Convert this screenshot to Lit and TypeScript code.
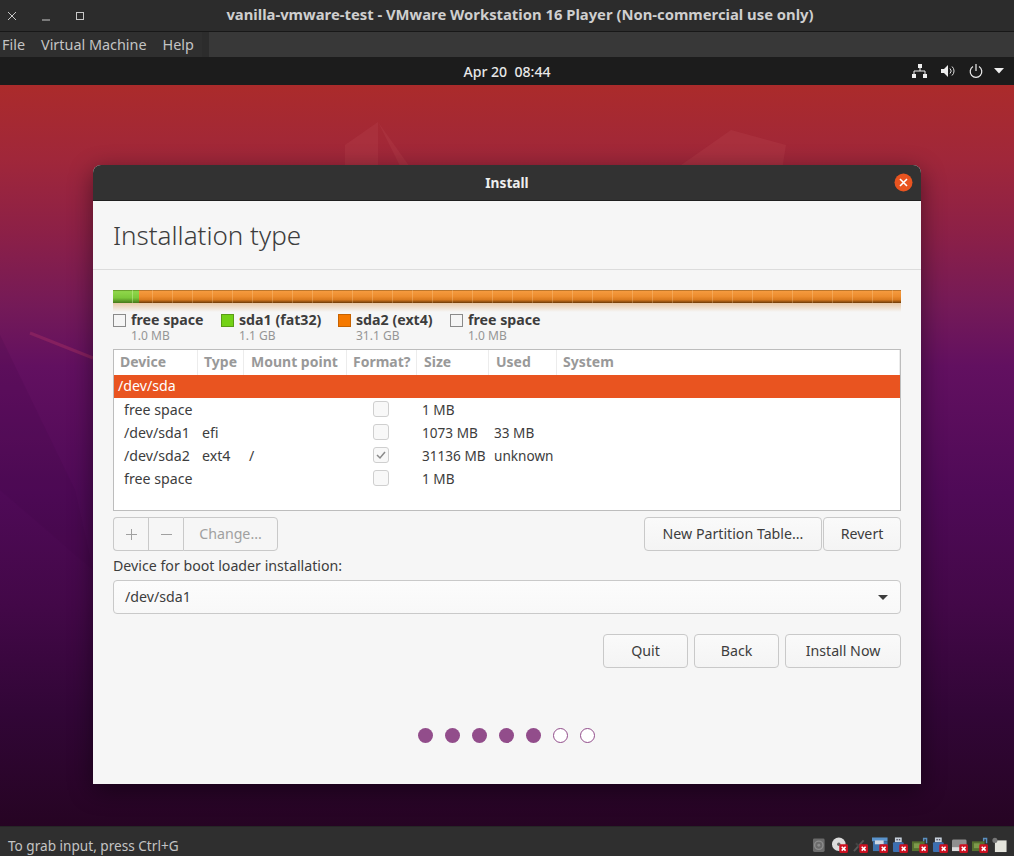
import { LitElement, html, css, svg } from "lit";
import { customElement } from "lit/decorators.js";

const badge = svg`<rect x="7.5" y="7" width="9" height="9" rx="1.5" fill="#cc1020"/><path d="M10 9.5l4 4M14 9.5l-4 4" stroke="#fff" stroke-width="1.6"/>`;
const card = svg`<rect x="0" y="4" width="13" height="10" fill="#55702f"/><rect x="2" y="6" width="6" height="5" fill="#7d9a4c"/><path d="M12 4V1h3v5" fill="none" stroke="#5a8fc0" stroke-width="1.5"/>`;
const usb = svg`<rect x="3" y="0" width="7" height="5" fill="#c9d3de"/><rect x="4.5" y="1.5" width="1.5" height="1.5" fill="#556"/><rect x="7" y="1.5" width="1.5" height="1.5" fill="#556"/><rect x="1" y="5" width="11" height="10" rx="1" fill="#3c6fb0"/>`;
const statusIcons = [
  svg`<rect x="1" y="1" width="12" height="14" rx="1.5" fill="#6b6b6b"/><circle cx="7" cy="8" r="4.3" fill="none" stroke="#8d8d8d" stroke-width="1.4"/><circle cx="7" cy="8" r="1.5" fill="#8d8d8d"/>`,
  svg`<circle cx="7" cy="7" r="7" fill="#dcdcdc"/><circle cx="7" cy="7" r="1.8" fill="#666"/>${badge}`,
  svg`<path d="M2 14L12 3" stroke="#585858" stroke-width="2"/><path d="M4 6l5 5" stroke="#444" stroke-width="2"/>${badge}`,
  svg`<rect x="0" y="0" width="16" height="4" fill="#5a93cc"/><rect x="1" y="4" width="15" height="10" fill="#3f74ae"/><rect x="3" y="3" width="9" height="4" fill="#cfd8e3"/>${badge}`,
  svg`${usb}${badge}`,
  svg`${card}${badge}`,
  svg`${usb}${badge}`,
  svg`<rect x="0" y="2" width="15" height="12" rx="1.5" fill="#8f8f8f"/><rect x="0" y="10" width="15" height="4" fill="#dcdcdc"/>${badge}`,
  svg`${card}${badge}`,
  svg`<path d="M3 3h12v12H3z" fill="#e4e4dc"/><circle cx="3" cy="3" r="2.6" fill="#777"/>`,
];

const legend = [
  { c: "#f5f5f5", b: "#8a8a8a", n: "free space", s: "1.0 MB", w: 108 },
  { c: "#73d216", b: "#5a9c16", n: "sda1 (fat32)", s: "1.1 GB", w: 117 },
  { c: "#f57900", b: "#c76200", n: "sda2 (ext4)", s: "31.1 GB", w: 112 },
  { c: "#f5f5f5", b: "#8a8a8a", n: "free space", s: "1.0 MB", w: 108 },
];
const rows = [
  { d: "free space", t: "", m: "", f: false, s: "1 MB", u: "" },
  { d: "/dev/sda1", t: "efi", m: "", f: false, s: "1073 MB", u: "33 MB" },
  { d: "/dev/sda2", t: "ext4", m: "/", f: true, s: "31136 MB", u: "unknown" },
  { d: "free space", t: "", m: "", f: false, s: "1 MB", u: "" },
];
const heads = ["Device", "Type", "Mount point", "Format?", "Size", "Used", "System"];

@customElement("app-root")
export class AppRoot extends LitElement {
  static styles = css`
    :host { display: block; width: 1014px; height: 856px; overflow: hidden; font-family: "Noto Sans", sans-serif; font-size: 14px; color: #3d3d3d; }
    .frame { display: flex; flex-direction: column; height: 856px; }
    .titlebar { height: 31px; background: #2c2c2c; border-bottom: 1px solid #181818; display: flex; align-items: center; position: relative; flex: none; }
    .wc { display: flex; padding-left: 7px; gap: 24px; }
    .wc svg { width: 10px; height: 10px; display: block; }
    .wtitle { position: absolute; left: 26px; right: 0; top: 4px; text-align: center; color: #cfcfcf; font-weight: 700; font-size: 14.8px; line-height: 20px; white-space: nowrap; }
    .menubar { height: 25px; display: flex; background: #383838; flex: none; }
    .menus { width: 202px; background: #2f2f2f; display: flex; color: #c4c4c4; font-size: 14.4px; line-height: 25px; padding-left: 2px; box-sizing: border-box; gap: 16px; }
    .grip { width: 7px; background: #2c2c2c; }
    .panel { height: 28px; background: #1c1c1c; color: #e8e8e8; display: flex; align-items: center; position: relative; flex: none; }
    .clock { position: absolute; left: 0; right: 0; text-align: center; font-size: 14.1px; font-weight: 500; white-space: pre; }
    .tray { margin-left: auto; display: flex; align-items: center; padding-right: 10px; }
    .tray svg { display: block; }
    .desktop { flex: 1; position: relative; padding: 80px 93px 0; background: linear-gradient(180deg, #ab2b2b 0%, #a0273a 10%, #8c2047 20%, #741a58 30%, #621060 38%, #4f0a57 55%, #430848 70%, #310636 85%, #260423 100%); }
    .deco { position: absolute; left: 0; top: 0; }
    .window { position: relative; height: 619px; border-radius: 8px 8px 0 0; box-shadow: 0 6px 24px rgba(0,0,0,.45); display: flex; flex-direction: column; background: #f6f6f6; }
    .wbar { height: 35px; background: #323232; border-bottom: 1px solid #1f1f1f; border-radius: 8px 8px 0 0; color: #eee; font-weight: 700; font-size: 13.7px; display: flex; align-items: center; justify-content: center; position: relative; flex: none; }
    .close { position: absolute; right: 8px; top: 8px; width: 19px; height: 19px; display: block; }
    .heading { height: 67px; border-bottom: 1px solid #dcdcdc; padding-left: 20px; display: flex; align-items: center; font-size: 26px; font-weight: 300; color: #3d3d3d; padding-bottom: 1px; box-sizing: content-box; flex: none; }
    .body { padding: 20px 20px 0; display: flex; flex-direction: column; flex: 1; }
    .bar { height: 13px; display: flex; background: repeating-linear-gradient(90deg, transparent 0 19px, rgba(255,220,170,.28) 19px 20px), linear-gradient(180deg, #9a6020 0, #f59a3e 10%, #ec8c2e 50%, #d97a1f 75%, #6b3a08 100%); position: relative; flex: none; }
    .bar i { display: block; width: 26px; height: 13px; background: repeating-linear-gradient(90deg, transparent 0 19px, rgba(230,255,190,.35) 19px 20px), linear-gradient(180deg, #5a8a20 0, #8fd64a 12%, #7cc83a 60%, #47781a 100%); }
    .reflect { height: 9px; flex: none; background: linear-gradient(180deg, #e8c9a8, #f6f6f6); }
    .legend { display: flex; height: 37px; flex: none; margin-top: 0; }
    .li { display: flex; gap: 5px; }
    .sq { width: 11px; height: 11px; border: 1px solid; margin-top: 2px; flex: none; }
    .ln { font-weight: 700; font-size: 14.2px; line-height: 17px; color: #3d3d3d; white-space: nowrap; margin-top: -1px; }
    .ls { font-size: 12px; line-height: 15px; color: #959595; margin-top: 0; }
    .table { margin-top: 0; height: 162px; box-sizing: border-box; border: 1px solid #bdbdbd; background: #fff; flex: none; }
    .tr { display: grid; grid-template-columns: 84px 46px 103px 70px 72px 68px 1fr; height: 23px; align-items: center; font-size: 14.2px; line-height: 20px; }
    .th { height: 25px; font-weight: 700; color: #999; font-size: 14px; }
    .th span { height: 25px; line-height: 23px; padding-left: 6px; border-right: 1px solid #ececec; box-sizing: border-box; white-space: nowrap; overflow: hidden; }
    .th span:nth-child(3), .th span:nth-child(5), .th span:nth-child(6) { padding-left: 7px; }
    .sel { background: #e95420; color: #fff; height: 23px; line-height: 22px; padding-left: 4px; font-size: 14.2px; }
    .tr span { white-space: nowrap; }
    .c0 { padding-left: 10px; } .c1 { padding-left: 4px; } .c2 { padding-left: 5px; } .c4 { padding-left: 5px; font-size: 13.6px; } .c5 { padding-left: 5px; font-size: 13.6px; }
    .check { width: 14px; height: 14px; border: 1px solid #cfcfcf; border-radius: 3px; background: #f8f8f8; margin-left: 26px; display: block; margin-top: -2px; }
    .check svg { display: block; }
    .tools { display: flex; margin-top: 6px; flex: none; }
    .btn { height: 34px; box-sizing: border-box; border: 1px solid #c9c9c9; border-radius: 4px; background: linear-gradient(#fafafa, #f4f4f4); display: flex; align-items: center; justify-content: center; font-size: 14.2px; color: #3d3d3d; padding-bottom: 2px; }
    .group { display: flex; width: 165px; }
    .group .btn { color: #a0a0a0; background: #f6f6f6; border-radius: 0; border-right: none; padding-bottom: 0; }
    .group .btn:first-child { border-radius: 4px 0 0 4px; width: 35px; }
    .group .btn:nth-child(2) { width: 35px; }
    .group .btn:last-child { border-radius: 0 4px 4px 0; border-right: 1px solid #c9c9c9; flex: 1; padding-bottom: 2px; }
    .group svg { display: block; width: 11px; height: 11px; }
    .grow { flex: 1; }
    .label { font-size: 14.2px; line-height: 20px; margin-top: 5px; flex: none; }
    .combo { height: 34px; margin-top: 4px; box-sizing: border-box; border: 1px solid #c9c9c9; border-radius: 4px; background: linear-gradient(#fcfcfc, #f8f8f8); display: flex; align-items: center; padding: 0 12px 2px 11px; font-size: 14.2px; flex: none; }
    .arrow { margin-left: auto; margin-top: 2px; width: 0; height: 0; border-left: 5px solid transparent; border-right: 5px solid transparent; border-top: 5px solid #3d3d3d; }
    .nav { display: flex; justify-content: flex-end; gap: 6px; margin-top: 20px; flex: none; }
    .dots { display: flex; justify-content: center; gap: 12px; margin-top: 60px; padding-right: 2px; flex: none; }
    .dot { width: 15px; height: 15px; border-radius: 50%; background: #924d8b; box-sizing: border-box; }
    .dot.o { background: #fff; border: 1.5px solid #924d8b; }
    .status { height: 30px; background: #2f2f2f; color: #c4c4c4; display: flex; align-items: center; font-size: 13.6px; padding: 8px 0 0 8px; flex: none; border-top: 1px solid #262626; box-sizing: border-box; }
    .sicons { margin-left: auto; display: flex; gap: 3.5px; padding-right: 6px; margin-top: -1px; }
    .sicons svg { display: block; width: 16.5px; height: 16.5px; }
  `;

  render() {
    return html`<div class="frame">
      <div class="titlebar">
        <div class="wc">
          <svg viewBox="0 0 10 10"><path d="M1 1l8 8M9 1l-8 8" stroke="#c8c8c8" stroke-width="1" fill="none"/></svg>
          <svg viewBox="0 0 10 10"><path d="M1 9h8" stroke="#c8c8c8" stroke-width="1" fill="none"/></svg>
          <svg viewBox="0 0 10 10"><rect x="1.5" y="1.5" width="7" height="7" stroke="#c8c8c8" stroke-width="1" fill="none"/></svg>
        </div>
        <div class="wtitle">vanilla-vmware-test - VMware Workstation 16 Player (Non-commercial use only)</div>
      </div>
      <div class="menubar">
        <div class="menus"><span>File</span><span>Virtual Machine</span><span>Help</span></div>
        <div class="grip"></div>
      </div>
      <div class="panel">
        <div class="clock">Apr 20  08:44</div>
        <div class="tray">
          <svg width="16" height="14" viewBox="0 0 16 14"><rect x="6" y="0" width="4" height="4" fill="#eee"/><rect x="0" y="10" width="4" height="4" fill="#eee"/><rect x="11" y="10" width="4" height="4" fill="#eee"/><path d="M8 4v3M2 10V7h11v3" stroke="#eee" fill="none"/></svg>
          <svg style="margin-left:13px" width="15" height="14" viewBox="0 0 15 14"><path d="M0 5h3l4-4v12l-4-4H0z" fill="#eee"/><path d="M9 4.5a3.5 3.5 0 010 5M11 2.5a6 6 0 010 9" stroke="#ddd" fill="none"/></svg>
          <svg style="margin-left:13px" width="14" height="14" viewBox="0 0 14 14"><path d="M4 2.6a5.8 5.8 0 106 0" stroke="#eee" stroke-width="1.2" fill="none"/><path d="M7 0v7" stroke="#eee" stroke-width="1.2"/></svg>
          <svg style="margin-left:11px" width="10" height="6" viewBox="0 0 10 6"><path d="M0 0h10L5 5.5z" fill="#eee"/></svg>
        </div>
      </div>
      <div class="desktop">
        <svg class="deco" width="1014" height="741" viewBox="0 85 1014 741">
          <path d="M378 122L345 145V170H378Z" fill="#b4404a" opacity=".35"/>
          <path d="M378 122L412 170H402Z" fill="#b4404a" opacity=".35"/>
          <path d="M731 130L786 145L782 170H674Z" fill="#b4404a" opacity=".35"/>
          <path d="M0 335L75 490L93 570L0 490Z" fill="#3a0545" opacity=".15"/>
          <path d="M30 333L93 358" stroke="#85205f" stroke-width="3"/>
        </svg>
        <div class="window">
          <div class="wbar">Install
            <svg class="close" viewBox="0 0 19 19"><circle cx="9.5" cy="9.5" r="9" fill="#e95420"/><path d="M6 6l7 7M13 6l-7 7" stroke="#fff" stroke-width="1.6"/></svg>
          </div>
          <div class="heading">Installation type</div>
          <div class="body">
            <div class="bar"><i></i></div>
            <div class="reflect"></div>
            <div class="legend">
              ${legend.map((l) => html`<div class="li" style="width:${l.w}px">
                <div class="sq" style="background:${l.c};border-color:${l.b}"></div>
                <div><div class="ln">${l.n}</div><div class="ls">${l.s}</div></div>
              </div>`)}
            </div>
            <div class="table">
              <div class="tr th">${heads.map((h) => html`<span>${h}</span>`)}</div>
              <div class="sel">/dev/sda</div>
              ${rows.map((r) => html`<div class="tr">
                <span class="c0">${r.d}</span><span class="c1">${r.t}</span><span class="c2">${r.m}</span>
                <span><span class="check">${r.f ? html`<svg width="14" height="14" viewBox="0 0 14 14"><path d="M3 7l3 3 5-6" stroke="#8a8a8a" stroke-width="1.5" fill="none"/></svg>` : ""}</span></span>
                <span class="c4">${r.s}</span><span class="c5">${r.u}</span><span></span>
              </div>`)}
            </div>
            <div class="tools">
              <div class="group">
                <div class="btn"><svg viewBox="0 0 11 11"><path d="M0 5.5h11M5.5 0v11" stroke="#a0a0a0"/></svg></div>
                <div class="btn"><svg viewBox="0 0 11 11"><path d="M0 5.5h11" stroke="#a0a0a0"/></svg></div>
                <div class="btn">Change...</div>
              </div>
              <div class="grow"></div>
              <div class="btn" style="width:178px">New Partition Table...</div>
              <div class="btn" style="width:78px;margin-left:1px">Revert</div>
            </div>
            <div class="label">Device for boot loader installation:</div>
            <div class="combo">/dev/sda1<span class="arrow"></span></div>
            <div class="nav">
              <div class="btn" style="width:85px">Quit</div>
              <div class="btn" style="width:85px">Back</div>
              <div class="btn" style="width:116px">Install Now</div>
            </div>
            <div class="dots">
              ${[0, 1, 2, 3, 4, 5, 6].map((i) => html`<div class="dot ${i > 4 ? "o" : ""}"></div>`)}
            </div>
          </div>
        </div>
      </div>
      <div class="status">
        <span>To grab input, press Ctrl+G</span>
        <div class="sicons">${statusIcons.map((i) => html`<svg viewBox="0 0 17 16">${i}</svg>`)}</div>
      </div>
    </div>`;
  }
}
